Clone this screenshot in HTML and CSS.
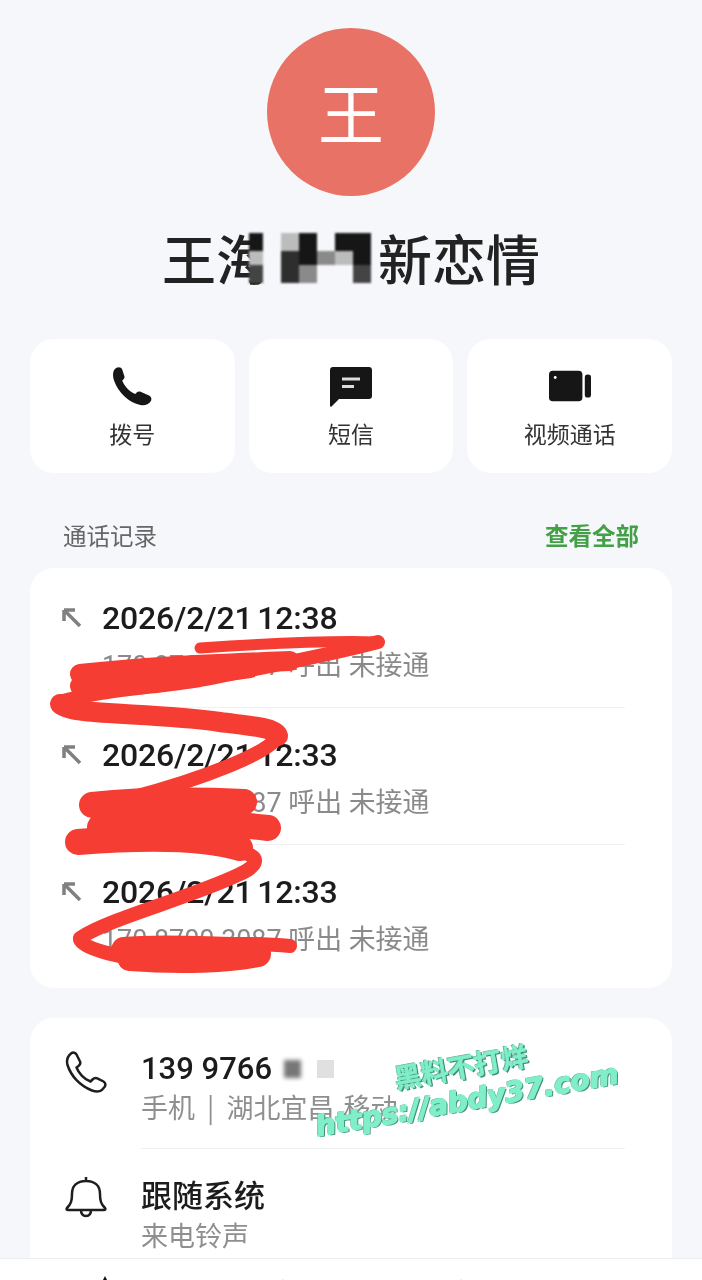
FILE: index.html
```html
<!DOCTYPE html>
<html lang="zh">
<head>
    <meta charset="utf-8">
    <title>王海新恋情</title>
    <link rel="stylesheet" href="styles.css">
</head>
<body>
    <div id="contact-page">
        <div class="avatar">王</div>
        <h1 class="contact-name">王海<span class="mosaic">
            <i class="cell-k"></i><i class="cell-w"></i><i class="cell-l"></i><i class="cell-k"></i><i class="cell-w"></i><i class="cell-k"></i><i class="cell-k"></i>
            <i class="cell-l"></i><i class="cell-w"></i><i class="cell-d"></i><i class="cell-k"></i><i class="cell-g"></i><i class="cell-l"></i><i class="cell-k"></i>
            <i class="cell-n"></i><i class="cell-w"></i><i class="cell-d"></i><i class="cell-g"></i><i class="cell-w"></i><i class="cell-w"></i><i class="cell-n"></i>
        </span>新恋情</h1>

        <div class="actions">
            <div class="action-card">
                <svg class="action-icon" viewBox="0 0 40 40"><path d="M4.5 .8C7-.3 9.4.4 10.2 2.6L12.4 9.2C12.9 10.8 11.6 12.2 10.2 13.6C12 19 17.6 25 23.2 27C24.5 25.6 26 24 28 24.6L37 28.6C39.6 30 40 32.4 38.6 34.6C36.8 37.2 32.6 39 28.4 38C17 35.6 6.4 25.6 2 13.4C.2 8.4.8 2.6 4.5.8Z"/></svg>
                <span>拨号</span>
            </div>
            <div class="action-card">
                <svg class="action-icon" viewBox="0 0 42 40"><path d="M3 0H39C40.8 0 42 1.2 42 3V29C42 30.8 40.8 32 39 32H9L1.5 39.5C.8 40 0 39.6 0 38.8V3C0 1.2 1.2 0 3 0Z"/><path class="icon-cut" d="M12 12H30M12 19.500H24"/></svg>
                <span>短信</span>
            </div>
            <div class="action-card">
                <svg class="action-icon" viewBox="0 0 44 40"><rect x="0" y="3" width="35" height="32" rx="4"/><rect x="37.500" y="7" width="6.500" height="24" rx="3"/><circle class="icon-dot" cx="6.500" cy="10" r="1.500"/></svg>
                <span>视频通话</span>
            </div>
        </div>

        <div class="section-head">
            <span>通话记录</span>
            <span class="view-all">查看全部</span>
        </div>

        <div class="card call-list">
            <div class="call-row">
                <svg class="call-arrow" viewBox="0 0 20 20"><path d="M2 2H13M2 2V13M2 2L18 18"/></svg>
                <div class="call-body">
                    <div class="call-time">2026/2/21 12:38</div>
                    <div class="call-detail">170 8700 3087 呼出 未接通</div>
                </div>
            </div>
            <div class="call-row">
                <svg class="call-arrow" viewBox="0 0 20 20"><path d="M2 2H13M2 2V13M2 2L18 18"/></svg>
                <div class="call-body">
                    <div class="call-time">2026/2/21 12:33</div>
                    <div class="call-detail">170 8700 3087 呼出 未接通</div>
                </div>
            </div>
            <div class="call-row">
                <svg class="call-arrow" viewBox="0 0 20 20"><path d="M2 2H13M2 2V13M2 2L18 18"/></svg>
                <div class="call-body">
                    <div class="call-time">2026/2/21 12:33</div>
                    <div class="call-detail">170 8700 3087 呼出 未接通</div>
                </div>
            </div>
        </div>

        <div class="card info-list">
            <div class="info-row">
                <svg class="info-icon" viewBox="0 0 42 42"><path d="M6 2.500C8 1 10.500 1.500 11.500 3.500L15 10.500C15.800 12.200 15 13.800 13.500 15L11.500 16.500C13.500 22 19.500 28.500 25.500 30.500L27.500 28.500C29 27 30.500 26.500 32.300 27.300L38.500 30.500C40.500 31.700 41 34 39.500 36L37.500 38.300C35 41 31 41 27 39.500C15 35 6 25 2.500 14C1.300 9.500 2.500 5.500 6 2.500Z"/></svg>
                <div class="info-body">
                    <div class="info-title">139 9766<span class="phone-blur-dark"></span><span class="phone-blur-light"></span></div>
                    <div class="info-sub">手机 &nbsp;|&nbsp; 湖北宜昌 <span class="carrier">移动</span></div>
                </div>
            </div>
            <div class="info-row info-row-last">
                <svg class="info-icon" viewBox="0 0 42 42"><path d="M2 32C6 28 7 25 7 18C7 10 12 5 21 5C30 5 35 10 35 18C35 25 36 28 40 32C40.800 33 40.300 34 39 34H3C1.700 34 1.200 33 2 32ZM21 1V5M16 34C16 38 18 40 21 40C24 40 26 38 26 34"/></svg>
                <div class="info-body">
                    <div class="info-title">跟随系统</div>
                    <div class="info-sub">来电铃声</div>
                </div>
            </div>
        </div>

        <div class="bottom-bar">
            <i class="tab-tip tab-tip-dark"></i>
            <i class="tab-tip"></i>
            <i class="tab-tip"></i>
        </div>

        <svg class="scribble" viewBox="0 0 702 1280">
            <path class="thin" d="M200 648C260 644 330 640 378 642"/>
            <path d="M378 642C330 655 260 668 200 680C150 688 100 690 60 702"/>
            <path class="mid" d="M80 674C150 666 220 664 290 661"/>
            <path class="mid" d="M80 686C130 680 190 676 250 668"/>
            <path class="mid" d="M60 704C70 716 150 712 220 722C258 727 276 728 278 736"/>
            <path d="M278 736C272 752 200 780 130 798"/>
            <path class="thick" d="M92 805C140 800 200 800 244 802"/>
            <path class="thick" d="M100 827C150 820 220 822 268 828"/>
            <path class="thick" d="M78 842C130 838 200 836 240 848"/>
            <path d="M240 852C262 856 258 866 240 874C190 898 110 918 80 938C78 946 110 958 170 962C220 962 250 956 262 950"/>
            <path class="thick" d="M124 950C160 946 210 950 250 950"/>
            <path class="thick" d="M130 958C180 962 230 960 258 954"/>
            <path d="M200 945C230 943 270 944 290 946"/>
        </svg>

        <div class="watermark">
            <div class="watermark-cn">黑料不打烊</div>
            <div class="watermark-url">https://abdy37.com</div>
        </div>
    </div>
</body>
</html>
```

FILE: styles.css
```css
* {
    box-sizing: border-box;
}

body {
    margin: 0;
    background-color: #f6f7fa;
    font-family: "Noto Sans CJK SC", "Noto Sans", sans-serif;
    color: #222;
}

#contact-page {
    position: relative;
    width: 702px;
    height: 1280px;
    overflow: hidden;
    padding-top: 28px;
    filter: blur(0.5px);
}

.avatar {
    width: 168px;
    height: 168px;
    margin: 0 auto;
    border-radius: 50%;
    background-color: #e87265;
    color: #fff;
    font-size: 66px;
    line-height: 164px;
    text-align: center;
}

.contact-name {
    display: flex;
    justify-content: center;
    align-items: center;
    height: 60px;
    margin: 32px 0 0;
    font-size: 54px;
    font-weight: 500;
    line-height: 60px;
}

.mosaic {
    display: grid;
    grid-template-columns: 14px 18px 18px 18px 18px 18px 18px;
    grid-template-rows: 18px 14px 18px;
    width: 122px;
    margin: 0 7px 0 -21px;
    filter: blur(1px);
}

.cell-k { background-color: #161616; }
.cell-n { background-color: #444; }
.cell-d { background-color: #2e2e2e; }
.cell-g { background-color: #8a8a8a; }
.cell-l { background-color: #bcbcbc; }
.cell-w { background-color: #f6f7fa; }

.actions {
    display: flex;
    gap: 14px;
    margin: 51px 30px 0;
}

.action-card {
    display: flex;
    flex: 1;
    flex-direction: column;
    align-items: center;
    height: 134px;
    padding-top: 28px;
    background-color: #fff;
    border-radius: 24px;
    font-size: 23px;
    line-height: 32px;
    color: #333;
}

.action-icon {
    width: 42px;
    height: 40px;
    margin-bottom: 10px;
    fill: #161616;
}

.icon-cut {
    fill: none;
    stroke: #ddd;
    stroke-width: 3;
}

.icon-dot {
    fill: #fff;
}

.section-head {
    display: flex;
    justify-content: space-between;
    margin: 46px 63px 17px;
    font-size: 23.500px;
    line-height: 32px;
    color: #666;
}

.view-all {
    color: #43a047;
    font-weight: 700;
}

.card {
    margin: 0 30px;
    background-color: #fff;
    border-radius: 24px;
}

.call-list {
    height: 420px;
    padding-top: 3px;
}

.call-row {
    display: flex;
    height: 137px;
    padding-left: 32px;
}

.call-arrow {
    flex: none;
    width: 20px;
    height: 20px;
    margin-top: 37px;
    fill: none;
    stroke: #808080;
    stroke-width: 3.500;
}

.call-body {
    flex: 1;
    margin: 0 47px 0 20px;
    padding-top: 27px;
    border-bottom: 1px solid #f0f1f3;
}

.call-row:last-child .call-body {
    border-bottom: none;
}

.call-time {
    font-family: Roboto, "Noto Sans CJK SC", sans-serif;
    font-size: 32px;
    font-weight: 500;
    line-height: 40px;
    letter-spacing: -0.2px;
    word-spacing: -3px;
    color: #1c1c1c;
}

.call-detail {
    margin-top: 10px;
    font-family: Roboto, "Noto Sans CJK SC", sans-serif;
    font-size: 26.900px;
    line-height: 36px;
    color: #8a8a8a;
}

.info-list {
    height: 240px;
    margin-top: 30px;
    border-radius: 24px 24px 0 0;
}

.info-row {
    display: flex;
    height: 131px;
    padding-left: 35px;
}

.info-row-last {
    height: 109px;
}

.info-icon {
    flex: none;
    width: 42px;
    height: 42px;
    margin-top: 33px;
    fill: none;
    stroke: #1e1e1e;
    stroke-width: 2.500;
    stroke-linejoin: round;
}

.info-row-last .info-icon {
    margin-top: 27px;
}

.info-body {
    flex: 1;
    margin: 0 47px 0 34px;
    padding-top: 31px;
    border-bottom: 1px solid #f0f1f3;
}

.info-row-last .info-body {
    border-bottom: none;
    padding-top: 28px;
}

.info-title {
    display: flex;
    align-items: center;
    font-family: Roboto, "Noto Sans CJK SC", sans-serif;
    font-size: 31px;
    font-weight: 500;
    line-height: 40px;
    color: #1c1c1c;
}

.phone-blur-dark {
    width: 17px;
    height: 18px;
    margin-left: 12px;
    background-color: #777;
    filter: blur(2px);
}

.phone-blur-light {
    width: 17px;
    height: 18px;
    margin-left: 16px;
    background-color: #e0e0e0;
}

.info-sub {
    font-size: 27px;
    line-height: 36px;
    color: #8f8f8f;
}

.carrier {
    margin-left: 3px;
}

.bottom-bar {
    display: flex;
    gap: 166px;
    height: 22px;
    padding: 17px 0 0 99px;
    background-color: #fff;
    border-top: 1px solid #eceef1;
}

.tab-tip {
    width: 12px;
    height: 12px;
    margin-top: 3px;
    background-color: #bbb;
    clip-path: polygon(50% 0, 100% 100%, 0 100%);
}

.tab-tip-dark {
    margin-top: 0;
    background-color: #111;
}

.scribble {
    position: absolute;
    top: 0;
    left: 0;
    width: 702px;
    height: 1280px;
    fill: none;
    stroke: #f63d34;
    stroke-width: 14;
    stroke-linecap: round;
    stroke-linejoin: round;
}

.scribble .thin {
    stroke-width: 11;
}

.scribble .mid {
    stroke-width: 20;
}

.scribble .thick {
    stroke-width: 26;
}

.watermark {
    position: absolute;
    top: 1049px;
    left: 303px;
    width: 322px;
    text-align: center;
    transform: rotate(-10deg);
    color: #80eec8;
    font-weight: 700;
    text-shadow: 1.500px 1.500px 0 #3f8f7a, -1px -1px 0 #5fae98;
}

.watermark-cn {
    font-size: 27px;
    line-height: 34px;
    -webkit-text-stroke: 0.500px #80eec8;
}

.watermark-url {
    font-family: "DejaVu Sans", sans-serif;
    font-size: 28px;
    font-style: italic;
    line-height: 36px;
    white-space: nowrap;
    -webkit-text-stroke: 1.500px #80eec8;
}
```
